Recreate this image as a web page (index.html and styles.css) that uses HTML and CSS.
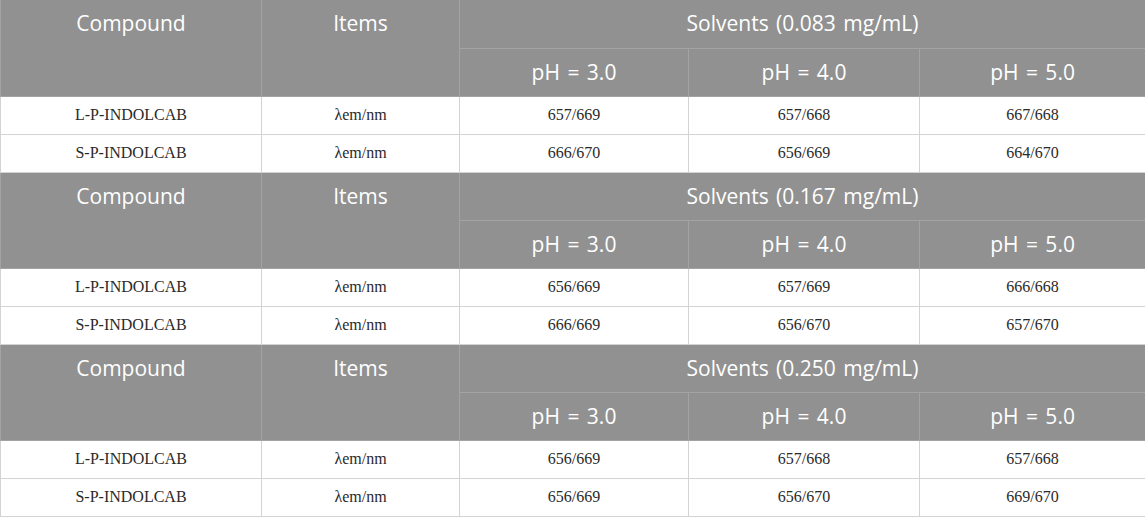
FILE: index.html
```html
<!DOCTYPE html>
<html>
<head>
<meta charset="utf-8">
<link rel="stylesheet" href="styles.css">
</head>
<body>
<table class="tbl">
  <colgroup>
    <col class="c1"><col class="c2"><col class="c3"><col class="c4"><col class="c5">
  </colgroup>
  <tbody>
    <tr class="h1"><th rowspan="2">Compound</th><th rowspan="2">Items</th><th colspan="3">Solvents (0.083 mg/mL)</th></tr>
    <tr class="h2"><th>pH = 3.0</th><th>pH = 4.0</th><th>pH = 5.0</th></tr>
    <tr class="d"><td>L-P-INDOLCAB</td><td>λem/nm</td><td>657/669</td><td>657/668</td><td>667/668</td></tr>
    <tr class="d"><td>S-P-INDOLCAB</td><td>λem/nm</td><td>666/670</td><td>656/669</td><td>664/670</td></tr>
    <tr class="h1"><th rowspan="2">Compound</th><th rowspan="2">Items</th><th colspan="3">Solvents (0.167 mg/mL)</th></tr>
    <tr class="h2"><th>pH = 3.0</th><th>pH = 4.0</th><th>pH = 5.0</th></tr>
    <tr class="d"><td>L-P-INDOLCAB</td><td>λem/nm</td><td>656/669</td><td>657/669</td><td>666/668</td></tr>
    <tr class="d"><td>S-P-INDOLCAB</td><td>λem/nm</td><td>666/669</td><td>656/670</td><td>657/670</td></tr>
    <tr class="h1"><th rowspan="2">Compound</th><th rowspan="2">Items</th><th colspan="3">Solvents (0.250 mg/mL)</th></tr>
    <tr class="h2"><th>pH = 3.0</th><th>pH = 4.0</th><th>pH = 5.0</th></tr>
    <tr class="d"><td>L-P-INDOLCAB</td><td>λem/nm</td><td>656/669</td><td>657/668</td><td>657/668</td></tr>
    <tr class="d"><td>S-P-INDOLCAB</td><td>λem/nm</td><td>656/669</td><td>656/670</td><td>669/670</td></tr>
  </tbody>
</table>
</body>
</html>
```
FILE: styles.css
```css
html, body {
  margin: 0;
  padding: 0;
  background: #ffffff;
}
.tbl {
  width: 1145px;
  border-collapse: collapse;
  table-layout: fixed;
  border-left: 1px solid #d6d6d6;
  border-right: 1px solid #a0a0a0;
}
.c1 { width: 261px; }
.c2 { width: 198px; }
.c3 { width: 229px; }
.c4 { width: 231px; }
.c5 { width: 226px; }
.tbl th {
  background: #919191;
  color: #ffffff;
  font-family: "Open Sans", "Noto Sans", sans-serif;
  font-weight: 400;
  font-size: 21px;
  line-height: 26px;
  height: 48px;
  padding: 10px 0 11px;
  box-sizing: border-box;
  vertical-align: top;
  text-align: center;
  border: 1px solid #a3a3a3;
  border-top: none;
  word-spacing: 2px;
}
.tbl .h2 th {
  height: 48px;
  padding: 10px 0 10px;
}
.tbl td {
  font-family: "Liberation Serif", "Times New Roman", serif;
  font-size: 16px;
  line-height: 20px;
  color: #2a2a2a;
  text-align: center;
  vertical-align: middle;
  height: 38px;
  padding: 0;
  box-sizing: border-box;
  border: 1px solid #d3d3d3;
}
```
